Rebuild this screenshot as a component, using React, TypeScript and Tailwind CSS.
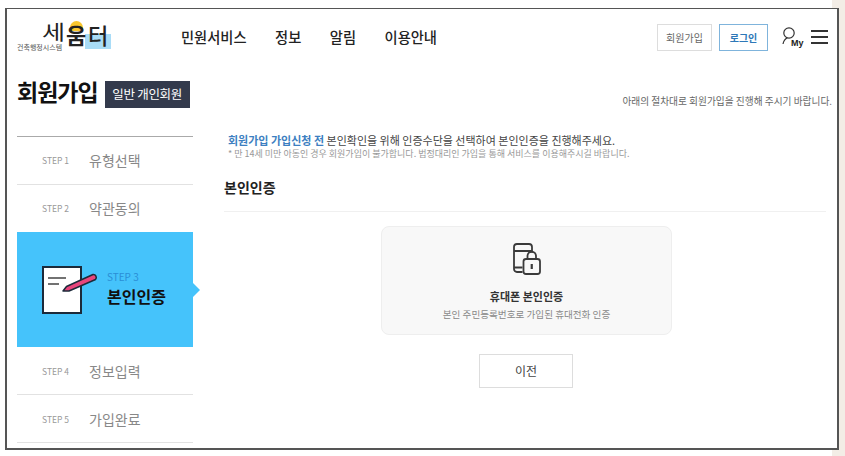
const steps = [
  { no: "STEP 1", name: "유형선택" },
  { no: "STEP 2", name: "약관동의" },
];
const stepsAfter = [
  { no: "STEP 4", name: "정보입력" },
  { no: "STEP 5", name: "가입완료" },
];

const StepRow = ({ no, name, low }: { no: string; name: string; low?: boolean }) => (
  <div className={`flex h-[48px] items-center border-b border-[#e2e2e2] pl-[25px] ${low ? "pt-[2px]" : ""}`}>
    <span className="w-[47px] text-[8.5px] text-[#999]">{no}</span>
    <span className="text-[14px] text-[#888]">{name}</span>
  </div>
);

const App = () => {
  return (
    <div className="h-[456px] w-[845px] overflow-hidden bg-[linear-gradient(to_right,#fff_832px,#f3ede6_832px)] pl-[5px] pt-[8px] font-['Noto_Sans_CJK_KR',sans-serif]">
      <div className="h-[442px] w-[834px] overflow-hidden border-2 border-t border-[#555] bg-white pt-[1px]">
        <header className="flex h-[54px] items-center">
          <div className="relative ml-[10px] h-[40px] w-[95px]">
            <div className="absolute left-[68px] top-[17px] h-[15px] w-[26px] bg-[#a9dcf7]" />
            <div className="absolute left-[53px] top-[4px] h-[10px] w-[13px] rounded-t-full bg-[#f9c62e]" />
            <span className="absolute bottom-[6px] left-0 text-[7px] leading-none text-[#555]">건축행정시스템</span>
            <span className="absolute left-[25px] top-[6px] origin-left scale-x-125 text-[20px] leading-[18px] text-[#222]">세</span>
            <span className="absolute left-[49px] top-0 text-[22px] font-bold leading-[35px] text-[#222]">움</span>
            <span className="absolute left-[71px] top-0 text-[22px] font-medium leading-[35px] text-[#222]">터</span>
          </div>
          <nav className="ml-[69px] flex gap-[28.5px] text-[14.25px] font-medium text-[#222]">
            <span>민원서비스</span>
            <span>정보</span>
            <span>알림</span>
            <span>이용안내</span>
          </nav>
          <div className="ml-auto flex items-center">
            <button className="h-[27px] w-[55px] border border-[#ddd] text-[10px] text-[#666]">회원가입</button>
            <button className="ml-[7px] h-[27px] w-[49px] border border-[#7fb4dc] text-[10px] font-bold text-[#2e78b8]">로그인</button>
            <svg className="ml-[14px]" width="23" height="22" viewBox="0 0 23 22" fill="none">
              <circle cx="7" cy="7" r="5.2" stroke="#333" strokeWidth="1.2" />
              <path d="M1 18c.6-3 2-5 4.500-6.200" stroke="#333" strokeWidth="1.2" />
              <text x="9" y="20" fontSize="9" fontWeight="700" fill="#222" fontFamily="Liberation Sans">My</text>
            </svg>
            <div className="ml-[6px] mr-[9px] flex w-[17px] flex-col gap-[4px]">
              <span className="h-[2px] bg-[#333]" />
              <span className="h-[2px] bg-[#333]" />
              <span className="h-[2px] bg-[#333]" />
            </div>
          </div>
        </header>
        <div className="flex">
          <aside className="ml-[10px] w-[176px] shrink-0">
            <div className="flex h-[72px] items-start pt-[10px]">
              <h1 className="text-[23px] font-bold leading-[34px] tracking-[-1px] text-[#111]">회원가입</h1>
              <span className="ml-[7px] mt-[7px] flex h-[27px] w-[85px] items-center justify-center bg-[#333a4c] text-[12.5px] tracking-[-0.3px] text-white">일반 개인회원</span>
            </div>
            <div className="border-t border-[#aaa]">
              {steps.map((s) => (
                <StepRow key={s.no} {...s} />
              ))}
            </div>
            <div className="relative -mt-[1px] flex h-[115px] items-center bg-[#45c3fb] pl-[25px]">
              <svg width="56" height="48" viewBox="0 0 56 48" fill="none" className="overflow-visible">
                <rect x="1" y="1" width="38" height="46" fill="#fff" stroke="#1c2a3a" strokeWidth="2" />
                <path d="M6 12h18M6 18h11" stroke="#444" strokeWidth="1.500" />
                <path d="M21 25L24.500 20.500L51 8.500a3 3 0 0 1 2.500 5L27 25Z" fill="#e8457c" stroke="#1c2a3a" strokeWidth="1.500" strokeLinejoin="round" />
              </svg>
              <div className="ml-[9px]">
                <div className="text-[10px] leading-[12px] text-[#2a8ed6]">STEP 3</div>
                <div className="text-[16px] font-bold leading-[26px] text-[#111]">본인인증</div>
              </div>
              <span className="absolute left-full top-1/2 -translate-y-1/2 border-y-[7px] border-l-[7px] border-y-transparent border-l-[#45c3fb]" />
            </div>
            <StepRow {...stepsAfter[0]} low />
            <StepRow {...stepsAfter[1]} low />
          </aside>
          <main className="ml-[31px] flex-1 pr-[5px]">
            <p className="pt-[30px] text-right text-[9.700px] leading-[14px] text-[#666]">아래의 절차대로 회원가입을 진행해 주시기 바랍니다.</p>
            <p className="mt-[24px] pl-[4px] text-[11px] leading-[16px] text-[#444]">
              <b className="font-bold text-[#3d7fc1]">회원가입 가입신청 전</b> 본인확인을 위해 인증수단을 선택하여 본인인증을 진행해주세요.
            </p>
            <p className="pl-[4px] text-[9px] leading-[12px] text-[#999]">* 만 14세 미만 아동인 경우 회원가입이 불가합니다. 법정대리인 가입을 통해 서비스를 이용해주시길 바랍니다.</p>
            <h2 className="mr-[6px] mt-[17px] border-b border-[#f0f0f0] pb-[14px] text-[14px] font-bold leading-[20px] text-[#222]">본인인증</h2>
            <div className="ml-[157px] mt-[14px] flex h-[109px] w-[291px] flex-col items-center rounded-[8px] border border-[#eee] bg-[#f8f8f8] pt-[16px]">
              <svg width="28" height="32" viewBox="0 0 28 32" fill="none" stroke="#3a3a3a" strokeWidth="1.800">
                <path d="M9.500 29H4a3 3 0 0 1-3-3V4a3 3 0 0 1 3-3h12a3 3 0 0 1 3 3v5.500" />
                <path d="M1 8h18M1 24.500h8.500" />
                <rect x="10.500" y="16" width="16.500" height="15" rx="2.500" />
                <path d="M14.500 16v-3a4.250 4.250 0 0 1 8.500 0v3" />
                <path d="M18.750 21v5" strokeWidth="2.200" />
              </svg>
              <div className="mt-[13px] text-[11px] font-bold leading-[16px] text-[#333]">휴대폰 본인인증</div>
              <div className="mt-[3px] text-[9.600px] leading-[14px] text-[#888]">본인 주민등록번호로 가입된 휴대전화 인증</div>
            </div>
            <div className="ml-[255px] mt-[19px] flex h-[34px] w-[94px] items-center justify-center border border-[#ddd] text-[12px] text-[#444]">이전</div>
          </main>
        </div>
      </div>
    </div>
  );
};

export default App;
